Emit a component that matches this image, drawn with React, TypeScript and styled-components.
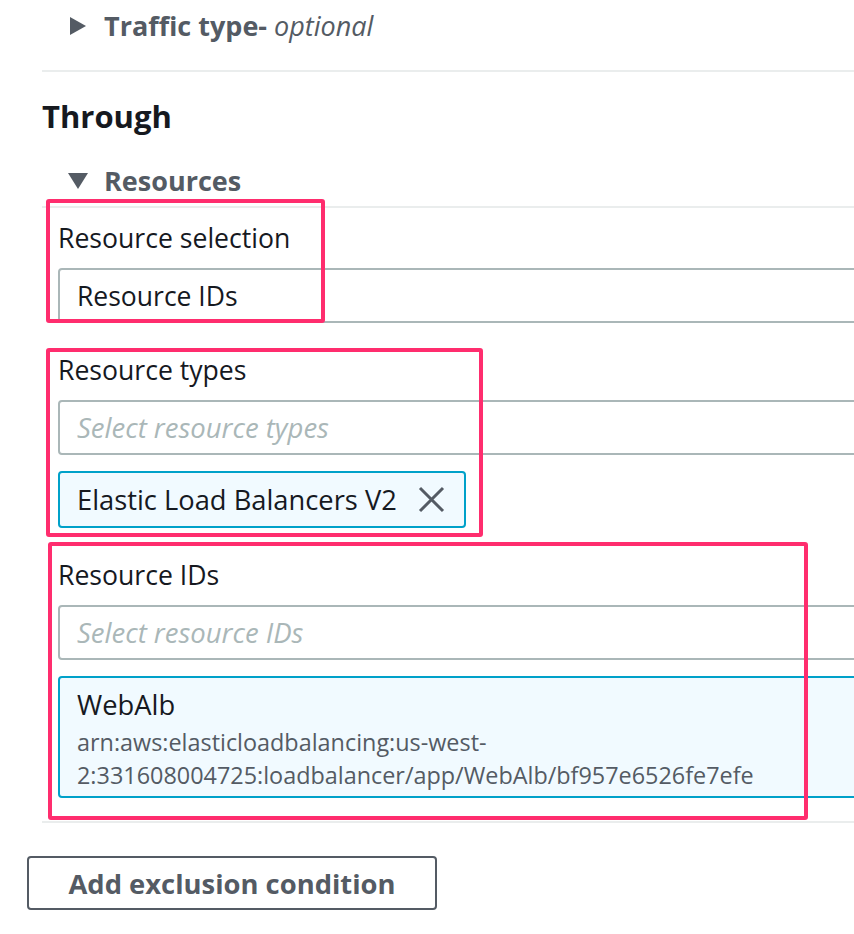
import React from "react";
import styled, { createGlobalStyle } from "styled-components";

const GlobalStyle = createGlobalStyle`
  html, body {
    margin: 0;
    padding: 0;
    background: #ffffff;
    overflow: hidden;
  }
  body {
    font-family: "Open Sans", "Noto Sans", sans-serif;
    color: #16191f;
  }
`;

const Page = styled.div`
  width: 960px;
`;

const Section = styled.div`
  margin-left: 42px;
`;

const ExpandHeader = styled.div<{ $h: number; $mt: number; $mb: number }>`
  display: flex;
  align-items: center;
  gap: 16px;
  height: ${(p) => p.$h}px;
  margin: ${(p) => p.$mt}px 0 ${(p) => p.$mb}px;
  padding-left: 26px;
  font-size: 27px;
  line-height: 36px;
  font-weight: 700;
  color: #545b64;
`;

const Optional = styled.i`
  font-weight: 400;
`;

const Divider = styled.div`
  height: 2px;
  background: #eaeded;
`;

const Heading = styled.h2`
  margin: 24px 0 0;
  font-size: 31px;
  font-weight: 700;
  line-height: 40px;
  color: #16191f;
`;

const Body = styled.div`
  position: relative;
  padding: 12px 0 23px 16px;
  display: flex;
  flex-direction: column;
  gap: 29px;
`;

const Field = styled.div`
  display: flex;
  flex-direction: column;
`;

const Label = styled.label`
  font-size: 26.6px;
  line-height: 36px;
  margin-bottom: 12px;
  color: #16191f;
`;

const Box = styled.div`
  height: 55px;
  box-sizing: border-box;
  border: 2px solid #aab7b8;
  border-radius: 4px;
  display: flex;
  align-items: center;
  padding-left: 17px;
  font-size: 26.5px;
`;

const Placeholder = styled.span`
  font-style: italic;
  font-size: 27.5px;
  color: #aab7b8;
`;

const Token = styled.div<{ $pad: string; $h?: number; $stretch?: boolean }>`
  margin-top: 16px;
  box-sizing: border-box;
  height: ${(p) => (p.$h ? `${p.$h}px` : "auto")};
  border: 2px solid #00a1c9;
  border-radius: 4px;
  background: #f1faff;
  padding: ${(p) => p.$pad};
  display: flex;
  align-items: center;
  gap: 21px;
  font-size: 27.3px;
  align-self: ${(p) => (p.$stretch ? "stretch" : "flex-start")};
`;

const TokenText = styled.div`
  display: flex;
  flex-direction: column;
  gap: 3px;
`;

const TokenTitle = styled.span`
  line-height: 36px;
`;

const TokenSub = styled.span`
  font-size: 23.4px;
  line-height: 33px;
  color: #545b64;
`;

const Close = styled.svg`
  width: 27px;
  height: 27px;
  flex-shrink: 0;
`;

const Highlight = styled.div<{ $t: number; $l: number; $w: number; $h: number }>`
  position: absolute;
  top: ${(p) => p.$t}px;
  left: ${(p) => p.$l}px;
  width: ${(p) => p.$w}px;
  height: ${(p) => p.$h}px;
  box-sizing: border-box;
  border: 4px solid #ff2d6e;
  border-radius: 3px;
  pointer-events: none;
`;

const ButtonRow = styled.div`
  padding: 33px 0 0 27px;
`;

const Button = styled.button`
  width: 410px;
  height: 54px;
  box-sizing: border-box;
  border: 2px solid #545b64;
  border-radius: 4px;
  background: #ffffff;
  font-family: inherit;
  font-size: 27.4px;
  font-weight: 700;
  color: #545b64;
  padding: 0;
`;

const Caret = ({ dir }: { dir: "right" | "down" }) => (
  <svg width="20" height="20" viewBox="0 0 20 20">
    {dir === "right" ? (
      <path d="M2 1 L18 10 L2 19 Z" fill="#545b64" />
    ) : (
      <path d="M0 2 L20 2 L10 18 Z" fill="#545b64" />
    )}
  </svg>
);

export default function App() {
  return (
    <Page>
      <GlobalStyle />
      <Section>
        <ExpandHeader $h={52} $mt={0} $mb={18}>
          <Caret dir="right" />
          <span>
            Traffic type- <Optional>optional</Optional>
          </span>
        </ExpandHeader>
        <Divider />
        <Heading>Through</Heading>
        <ExpandHeader $h={40} $mt={25} $mb={5}>
          <Caret dir="down" />
          <span>Resources</span>
        </ExpandHeader>
        <Divider />
        <Body>
          <Field>
            <Label>Resource selection</Label>
            <Box>Resource IDs</Box>
          </Field>
          <Field>
            <Label>Resource types</Label>
            <Box>
              <Placeholder>Select resource types</Placeholder>
            </Box>
            <Token $pad="0 19px 0 17px" $h={57}>
              <span>Elastic Load Balancers V2</span>
              <Close viewBox="0 0 27 27">
                <path d="M2 2 L25 25 M25 2 L2 25" stroke="#545b64" strokeWidth="3" />
              </Close>
            </Token>
          </Field>
          <Field>
            <Label>Resource IDs</Label>
            <Box>
              <Placeholder>Select resource IDs</Placeholder>
            </Box>
            <Token $pad="9px 17px 4px 17px" $stretch>
              <TokenText>
                <TokenTitle>WebAlb</TokenTitle>
                <TokenSub>
                  arn:aws:elasticloadbalancing:us-west-
                  <br />
                  2:331608004725:loadbalancer/app/WebAlb/bf957e6526fe7efe
                </TokenSub>
              </TokenText>
            </Token>
          </Field>
          <Highlight $t={-9} $l={4} $w={279} $h={124} />
          <Highlight $t={140} $l={4} $w={437} $h={189} />
          <Highlight $t={334} $l={6} $w={760} $h={278} />
        </Body>
        <Divider />
      </Section>
      <ButtonRow>
        <Button>Add exclusion condition</Button>
      </ButtonRow>
    </Page>
  );
}
